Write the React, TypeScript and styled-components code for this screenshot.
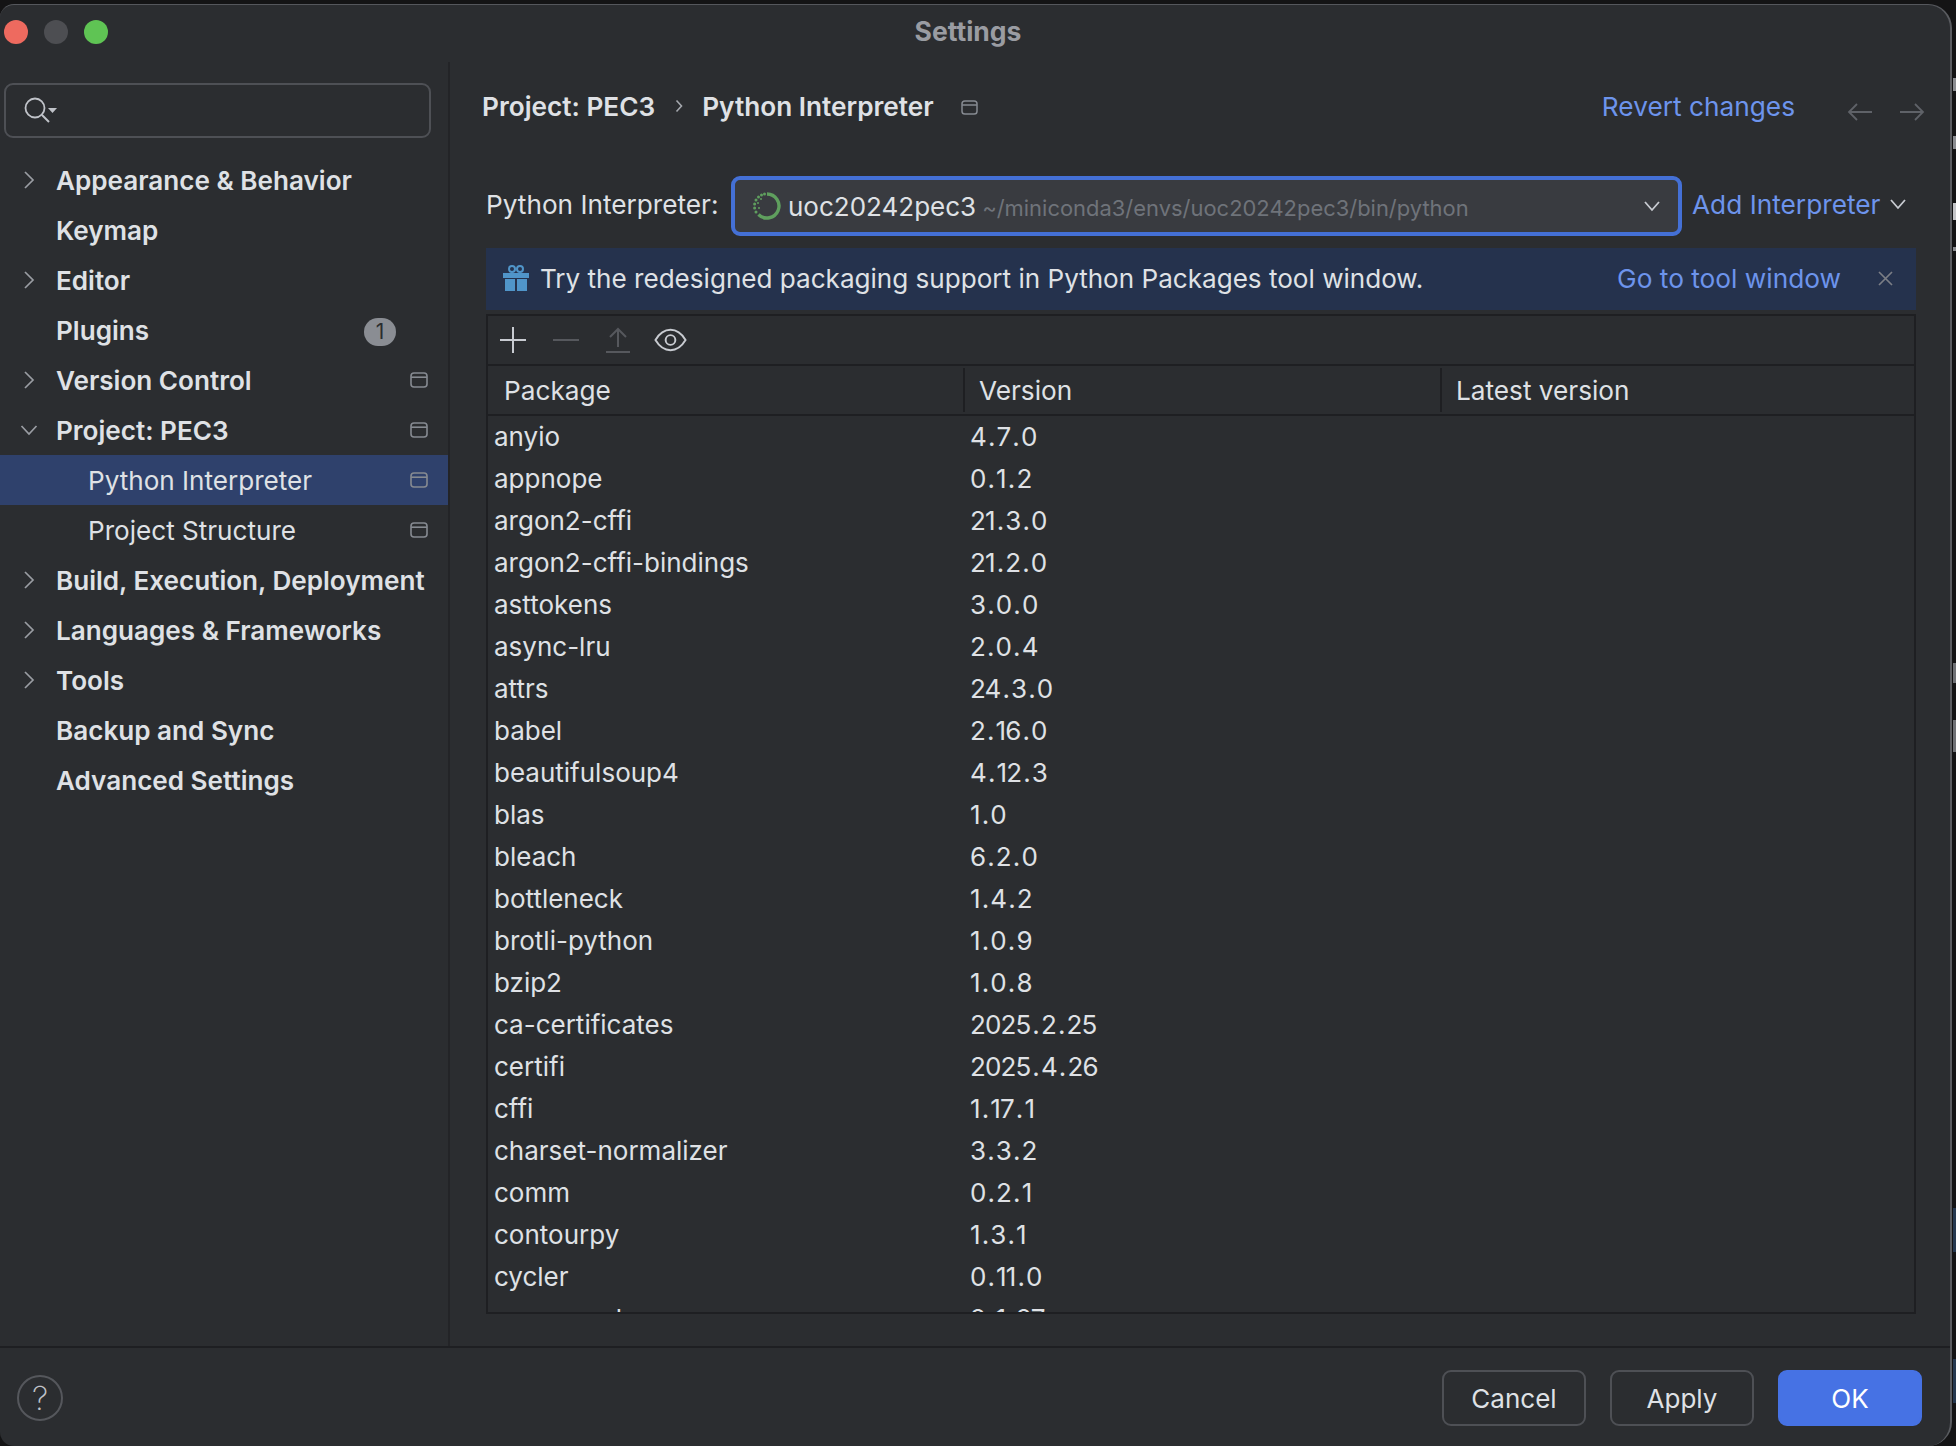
import React from "react";
import styled, { createGlobalStyle } from "styled-components";

const Global = createGlobalStyle`
  html, body { margin: 0; padding: 0; background: #141415; overflow: hidden; }
  * { box-sizing: border-box; }
  body { font-family: Inter, "Liberation Sans", sans-serif; color: #dfe1e5; }
`;

const Page = styled.div`
  width: 1956px; height: 1446px; display: flex; padding-top: 4px; background: #141415; overflow: hidden;
`;
const Window = styled.div`
  width: 1952px; height: 1442px; flex: none; display: flex; flex-direction: column; background: #2b2d30;
  border-radius: 14px 24px 24px 14px; border-top: 1.5px solid #55575c; border-right: 2px solid #5a5c60; overflow: hidden;
`;
const Edge = styled.div`
  flex: 1; display: flex; flex-direction: column; align-items: flex-end;
`;
const EdgeMark = styled.div<{ $gap: number; $h: number; $c: string; $w?: number }>`
  margin-top: ${(p) => p.$gap}px; height: ${(p) => p.$h}px; width: ${(p) => p.$w ?? 3}px; background: ${(p) => p.$c};
`;
const TitleBar = styled.div`
  height: 57px; flex: none; position: relative; display: flex; align-items: flex-start; padding: 15px 0 0 4px; gap: 16px;
`;
const Dot = styled.span<{ $c: string }>`
  width: 24px; height: 24px; border-radius: 50%; background: ${(p) => p.$c};
`;
const Title = styled.div`
  position: absolute; left: 0; right: 14px; top: 10px; text-align: center; font-size: 26.5px; line-height: 32px; font-weight: 700; color: #9a9ca2;
`;
const Body = styled.div`
  flex: 1; min-height: 0; display: flex;
`;
const Sidebar = styled.aside`
  width: 450px; flex: none; border-right: 2px solid #232427; padding-top: 21px; display: flex; flex-direction: column;
`;
const Search = styled.div`
  width: 427px; height: 55px; margin-left: 4px; border: 2px solid #4e5055; border-radius: 9px; display: flex; align-items: center; padding-left: 16px;
`;
const Tree = styled.div`
  margin-top: 17px; display: flex; flex-direction: column;
`;
const Row = styled.div<{ $selected?: boolean }>`
  height: 50px; display: flex; align-items: center; padding-right: 20px; background: ${(p) => (p.$selected ? "#2f416c" : "transparent")};
`;
const Slot = styled.span<{ $w: number }>`
  width: ${(p) => p.$w}px; flex: none; padding-left: 20px; display: flex; align-items: center;
`;
const Label = styled.span<{ $bold?: boolean }>`
  flex: 1; font-size: 26.1px; font-weight: ${(p) => (p.$bold ? 600 : 400)}; white-space: nowrap; color: #dfe1e5;
`;
const Badge = styled.span`
  width: 32px; height: 28px; border-radius: 14px; background: #8a8d93; color: #2b2d30; font-size: 21px; display: flex; align-items: center; justify-content: center; margin: 3px 32px 0 0;
`;
const Main = styled.main`
  flex: 1; min-width: 0; display: flex; flex-direction: column; padding: 20px 34px 32px 36px;
`;
const Crumbs = styled.div`
  height: 50px; flex: none; margin: 0 -9px 0 -4px; padding-bottom: 2px; display: flex; align-items: center;
`;
const Crumb = styled.span`
  font-size: 26.2px; font-weight: 600; color: #dfe1e5; white-space: nowrap;
`;
const CrumbSep = styled.span`
  width: 47px; display: flex; justify-content: center;
`;
const CrumbIcon = styled.span`
  margin: 2px 0 0 27px; display: flex; flex: 1;
`;
const Link = styled.span`
  color: #6d94ec; font-size: 26.25px; white-space: nowrap;
`;
const NavArrows = styled.div`
  margin-left: 52px; margin-top: 12px; display: flex; gap: 26px;
`;
const InterpRow = styled.div`
  margin-top: 44px; height: 60px; flex: none; display: flex; align-items: center;
`;
const InterpLabel = styled.span`
  width: 245px; font-size: 26.2px; white-space: nowrap; flex: none; margin-top: -4px;
`;
const Combo = styled.div`
  width: 951px; height: 60px; flex: none; border: 4px solid #4470d6; border-radius: 9px; background: #393b40; display: flex; align-items: center; padding: 0 17px 0 17px;
`;
const EnvName = styled.span`
  font-size: 26px; margin: 1px 0 0 6px; color: #dfe1e5;
`;
const EnvPath = styled.span`
  font-size: 21.95px; margin: 3px 0 0 6px; color: #6f737a; flex: 1; white-space: nowrap;
`;
const AddWrap = styled.div`
  margin-left: 10px; display: flex; align-items: center; gap: 9px; margin-top: -4px;
`;
const Banner = styled.div`
  margin-top: 12px; height: 62px; flex: none; display: flex; align-items: center; background: #25324d; padding: 0 23px 2px 17px;
`;
const BannerText = styled.span`
  flex: 1; font-size: 26.08px; margin-left: 11px; white-space: nowrap;
`;
const BannerClose = styled.span`
  margin-left: 37px; display: flex;
`;
const Table = styled.div`
  margin-top: 4px; flex: 1; min-height: 0; border: 2px solid #1e1f22; display: flex; flex-direction: column; overflow: hidden;
`;
const Toolbar = styled.div`
  height: 50px; flex: none; display: flex; gap: 2.5px; align-items: center; border-bottom: 2px solid #1e1f22;
`;
const Tool = styled.span`
  width: 50px; display: flex; justify-content: center; align-items: center;
`;
const Head = styled.div`
  height: 50px; flex: none; display: grid; grid-template-columns: 475px 477px 1fr; align-items: center; border-bottom: 2px solid #1e1f22;
`;
const HeadCell = styled.div<{ $first?: boolean }>`
  height: 44px; display: flex; align-items: center; padding-left: ${(p) => (p.$first ? 16 : 14)}px; font-size: 26.2px;
  border-left: ${(p) => (p.$first ? "none" : "2px solid #1e1f22")};
`;
const Rows = styled.div`
  flex: 1; min-height: 0; overflow: hidden; margin-top: -1px;
`;
const DataRow = styled.div`
  height: 42px; display: grid; grid-template-columns: 477px 1fr; align-items: center; font-size: 26px; white-space: nowrap;
`;
const PackageCell = styled.span`
  padding-left: 6px;
`;
const VersionCell = styled.span`
  padding-left: 5px; letter-spacing: -0.9px;
`;
const Period = styled.span`
  padding: 0 2px;
`;
const Footer = styled.footer`
  height: 100px; flex: none; border-top: 2px solid #1e1f22; display: flex; align-items: flex-start; padding: 22px 28px 0 17px; gap: 24px;
`;
const Help = styled.div`
  width: 46px; height: 46px; margin-top: 5px; margin-right: auto; border-radius: 50%; border: 2px solid #55575c; display: flex; align-items: center; justify-content: center; font-size: 33px; font-weight: 200; color: #c0c3c9;
`;
const Button = styled.div<{ $primary?: boolean }>`
  width: 144px; height: 56px; border-radius: 9px; display: flex; align-items: center; justify-content: center; font-size: 26px;
  background: ${(p) => (p.$primary ? "#4672e4" : "transparent")};
  border: 2px solid ${(p) => (p.$primary ? "#4672e4" : "#4e5055")};
  color: ${(p) => (p.$primary ? "#ffffff" : "#dfe1e5")};
`;

const Chevron = ({ open }: { open?: boolean }) =>
  open ? (
    <svg width="18" height="18" viewBox="0 0 18 18" fill="none" stroke="#9a9da3" strokeWidth="1.7">
      <path d="M1.5 5l7.5 8 7.5-8" />
    </svg>
  ) : (
    <svg width="18" height="18" viewBox="0 0 18 18" fill="none" stroke="#9a9da3" strokeWidth="1.7">
      <path d="M5 1l8 8-8 8" />
    </svg>
  );

const WinIcon = ({ w = 18, h = 16 }: { w?: number; h?: number }) => (
  <svg width={w} height={h} viewBox="0 0 18 16" fill="none" stroke="#868a91" strokeWidth="1.6">
    <rect x="1" y="1" width="16" height="14" rx="3" />
    <path d="M1 5.2h16" />
  </svg>
);

const SearchIcon = () => (
  <svg width="36" height="30" viewBox="0 0 36 30" fill="none">
    <circle cx="13" cy="12" r="9.5" stroke="#c0c3c9" strokeWidth="1.8" />
    <path d="M20 19l7 7" stroke="#c0c3c9" strokeWidth="1.9" />
    <path d="M26 12h9l-4.5 5z" fill="#c0c3c9" />
  </svg>
);

const Spinner = () => (
  <svg width="30" height="30" viewBox="0 0 30 30" fill="none">
    <path d="M15 3a12 12 0 1 1-8.5 20.5" stroke="#5f9f5e" strokeWidth="3.4" />
    {[
      [4, 21], [2.6, 17], [2.6, 13], [4, 9], [6.5, 6], [9.5, 4], [12.5, 3],
    ].map(([x, y]) => (
      <circle key={`${x}-${y}`} cx={x} cy={y} r="1.5" fill="#5f9f5e" />
    ))}
    <circle cx="6" cy="12" r="1" fill="#5f9f5e" />
    <circle cx="7" cy="17" r="1" fill="#5f9f5e" />
    <circle cx="9" cy="8" r="1" fill="#5f9f5e" />
  </svg>
);

const Gift = () => (
  <svg width="26" height="26" viewBox="0 0 26 26" fill="none">
    <circle cx="9" cy="4" r="3" stroke="#5095c9" strokeWidth="2" />
    <circle cx="17" cy="4" r="3" stroke="#5095c9" strokeWidth="2" />
    <rect x="0" y="8" width="26" height="5" fill="#5095c9" />
    <rect x="2" y="14" width="10" height="12" fill="#5095c9" />
    <rect x="14" y="14" width="10" height="12" fill="#5095c9" />
  </svg>
);

const ArrowLeft = () => (
  <svg width="26" height="18" viewBox="0 0 26 18" fill="none" stroke="#5f6268" strokeWidth="1.8">
    <path d="M25 9H2M10 1L2 9l8 8" />
  </svg>
);
const ArrowRight = () => (
  <svg width="26" height="18" viewBox="0 0 26 18" fill="none" stroke="#5f6268" strokeWidth="1.8">
    <path d="M1 9h23M16 1l8 8-8 8" />
  </svg>
);
const SmallDown = ({ color }: { color: string }) => (
  <svg width="18" height="12" viewBox="0 0 18 12" fill="none" stroke={color} strokeWidth="1.8">
    <path d="M2 2l7 8 7-8" />
  </svg>
);

const PlusIcon = () => (
  <svg width="28" height="28" viewBox="0 0 28 28" stroke="#c8cbd1" strokeWidth="2"><path d="M1 14h26M14 1v26" /></svg>
);
const MinusIcon = () => (
  <svg width="28" height="28" viewBox="0 0 28 28" stroke="#56585d" strokeWidth="2"><path d="M1 14h26" /></svg>
);
const UploadIcon = () => (
  <svg width="26" height="28" viewBox="0 0 26 28" fill="none" stroke="#56585d" strokeWidth="2">
    <path d="M13 21V3M5 11l8-8 8 8M1 26h24" />
  </svg>
);
const EyeIcon = () => (
  <svg width="33" height="24" viewBox="0 0 34 24" fill="none" stroke="#c8cbd1" strokeWidth="2">
    <path d="M1.5 12C6 4.5 11 1.5 17 1.5S28 4.5 32.5 12C28 19.5 23 22.5 17 22.5S6 19.5 1.5 12z" />
    <circle cx="17" cy="12" r="5" />
  </svg>
);
const CloseIcon = () => (
  <svg width="15" height="15" viewBox="0 0 15 15" stroke="#7b7e85" strokeWidth="1.7"><path d="M1 1l13 13M14 1L1 14" /></svg>
);
const CrumbChevron = () => (
  <svg width="10" height="14" viewBox="0 0 10 14" fill="none" stroke="#a5a8ae" strokeWidth="1.6"><path d="M2.5 1.5L7.5 7l-5 5.5" /></svg>
);

type TreeItem = { label: string; bold?: boolean; arrow?: "right" | "down"; win?: boolean; badge?: string; child?: boolean; selected?: boolean };

const treeItems: TreeItem[] = [
  { label: "Appearance & Behavior", bold: true, arrow: "right" },
  { label: "Keymap", bold: true },
  { label: "Editor", bold: true, arrow: "right" },
  { label: "Plugins", bold: true, badge: "1" },
  { label: "Version Control", bold: true, arrow: "right", win: true },
  { label: "Project: PEC3", bold: true, arrow: "down", win: true },
  { label: "Python Interpreter", child: true, selected: true, win: true },
  { label: "Project Structure", child: true, win: true },
  { label: "Build, Execution, Deployment", bold: true, arrow: "right" },
  { label: "Languages & Frameworks", bold: true, arrow: "right" },
  { label: "Tools", bold: true, arrow: "right" },
  { label: "Backup and Sync", bold: true },
  { label: "Advanced Settings", bold: true },
];

const packages: [string, string][] = [
  ["anyio", "4.7.0"], ["appnope", "0.1.2"], ["argon2-cffi", "21.3.0"], ["argon2-cffi-bindings", "21.2.0"],
  ["asttokens", "3.0.0"], ["async-lru", "2.0.4"], ["attrs", "24.3.0"], ["babel", "2.16.0"],
  ["beautifulsoup4", "4.12.3"], ["blas", "1.0"], ["bleach", "6.2.0"], ["bottleneck", "1.4.2"],
  ["brotli-python", "1.0.9"], ["bzip2", "1.0.8"], ["ca-certificates", "2025.2.25"], ["certifi", "2025.4.26"],
  ["cffi", "1.17.1"], ["charset-normalizer", "3.3.2"], ["comm", "0.2.1"], ["contourpy", "1.3.1"],
  ["cycler", "0.11.0"], ["cyrus-sasl", "2.1.27"],
];

const edgeMarks = [
  { gap: 74, h: 13, c: "#8a8c90" }, { gap: 45, h: 13, c: "#8a8c90" }, { gap: 54, h: 17, c: "#c4c5c8" },
  { gap: 27, h: 4, c: "#8a8c90" }, { gap: 412, h: 20, c: "#6f7175" }, { gap: 37, h: 32, c: "#6f7175" },
  { gap: 456, h: 44, c: "#26384f" }, { gap: 107, h: 44, c: "#26384f" },
];

const Version = ({ value }: { value: string }) => (
  <VersionCell>
    {value.split(".").map((part, i) => (
      <React.Fragment key={i}>
        {i > 0 && <Period>.</Period>}
        {part}
      </React.Fragment>
    ))}
  </VersionCell>
);

export default function App() {
  return (
    <Page>
      <Global />
      <Window>
        <TitleBar>
          <Dot $c="#ee6a5f" />
          <Dot $c="#4d4e52" />
          <Dot $c="#5fc454" />
          <Title>Settings</Title>
        </TitleBar>
        <Body>
          <Sidebar>
            <Search><SearchIcon /></Search>
            <Tree>
              {treeItems.map((t) => (
                <Row key={t.label} $selected={t.selected}>
                  <Slot $w={t.child ? 88 : 56}>{t.arrow && <Chevron open={t.arrow === "down"} />}</Slot>
                  <Label $bold={t.bold}>{t.label}</Label>
                  {t.badge && <Badge>{t.badge}</Badge>}
                  {t.win && <WinIcon />}
                </Row>
              ))}
            </Tree>
          </Sidebar>
          <Main>
            <Crumbs>
              <Crumb>Project: PEC3</Crumb>
              <CrumbSep><CrumbChevron /></CrumbSep>
              <Crumb>Python Interpreter</Crumb>
              <CrumbIcon><WinIcon w={17} h={15} /></CrumbIcon>
              <Link>Revert changes</Link>
              <NavArrows><ArrowLeft /><ArrowRight /></NavArrows>
            </Crumbs>
            <InterpRow>
              <InterpLabel>Python Interpreter:</InterpLabel>
              <Combo>
                <Spinner />
                <EnvName>uoc20242pec3</EnvName>
                <EnvPath>~/miniconda3/envs/uoc20242pec3/bin/python</EnvPath>
                <SmallDown color="#c8cbd1" />
              </Combo>
              <AddWrap>
                <Link>Add Interpreter</Link>
                <SmallDown color="#c8cbd1" />
              </AddWrap>
            </InterpRow>
            <Banner>
              <Gift />
              <BannerText>Try the redesigned packaging support in Python Packages tool window.</BannerText>
              <Link>Go to tool window</Link>
              <BannerClose><CloseIcon /></BannerClose>
            </Banner>
            <Table>
              <Toolbar>
                <Tool><PlusIcon /></Tool>
                <Tool><MinusIcon /></Tool>
                <Tool><UploadIcon /></Tool>
                <Tool><EyeIcon /></Tool>
              </Toolbar>
              <Head>
                <HeadCell $first>Package</HeadCell>
                <HeadCell>Version</HeadCell>
                <HeadCell>Latest version</HeadCell>
              </Head>
              <Rows>
                {packages.map(([n, v]) => (
                  <DataRow key={n}>
                    <PackageCell>{n}</PackageCell>
                    <Version value={v} />
                  </DataRow>
                ))}
              </Rows>
            </Table>
          </Main>
        </Body>
        <Footer>
          <Help>?</Help>
          <Button>Cancel</Button>
          <Button>Apply</Button>
          <Button $primary>OK</Button>
        </Footer>
      </Window>
      <Edge>
        {edgeMarks.map((m, i) => (
          <EdgeMark key={i} $gap={m.gap} $h={m.h} $c={m.c} />
        ))}
      </Edge>
    </Page>
  );
}
